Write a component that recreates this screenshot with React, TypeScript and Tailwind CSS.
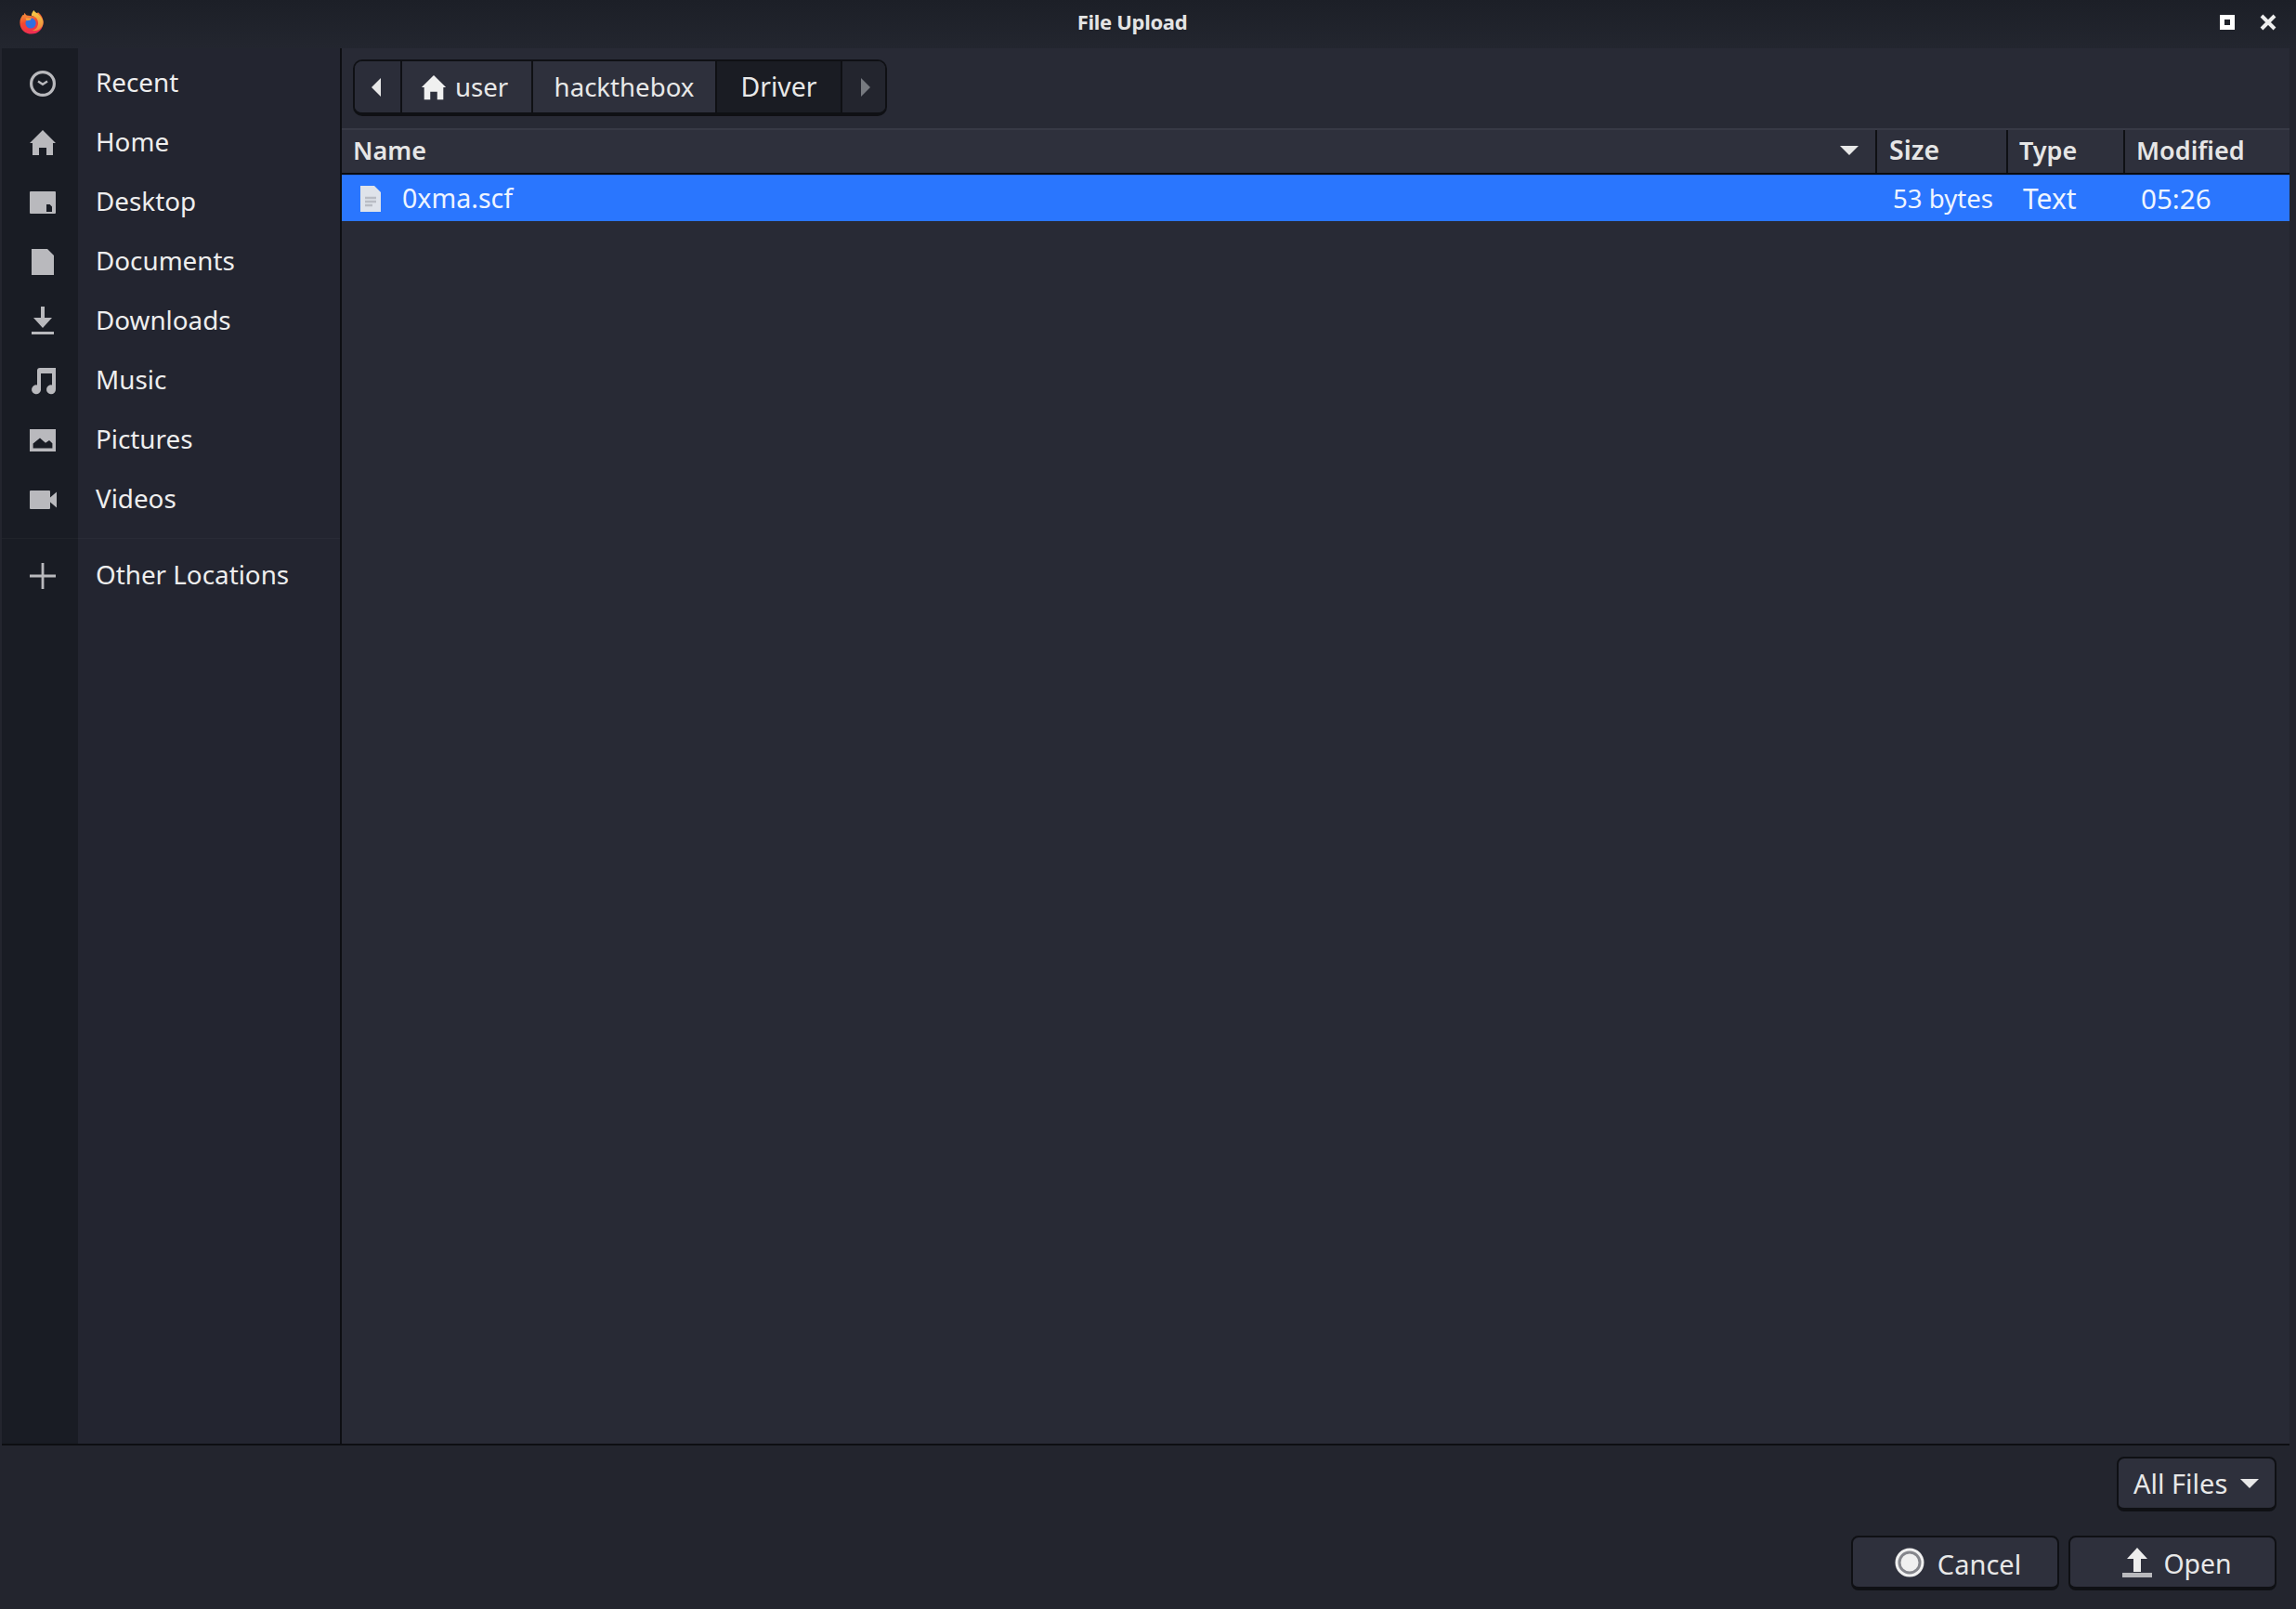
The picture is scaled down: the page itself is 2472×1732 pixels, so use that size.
import React from "react";

const C = "#b9b9bd";

function Firefox() {
  return (
    <svg width="28" height="28" viewBox="0 0 30 30" className="block">
      <defs>
        <linearGradient id="ffo" x1="0.2" y1="0" x2="0.5" y2="1">
          <stop offset="0" stopColor="#f7a13a" />
          <stop offset="0.45" stopColor="#f2492f" />
          <stop offset="1" stopColor="#ee2a55" />
        </linearGradient>
        <linearGradient id="ffy" x1="0.5" y1="0" x2="0.5" y2="1">
          <stop offset="0" stopColor="#f6cf49" />
          <stop offset="1" stopColor="#f0843a" />
        </linearGradient>
      </defs>
      <path d="M5 6.5 C3 9 1.5 11.5 1.5 15.5 C1.5 23 7.5 28.5 15 28.5 C22.5 28.5 28.5 23 28.5 15 C28.5 10 26 6 22.5 3.5 L17.5 8 L9 7 Z" fill="url(#ffo)" />
      <path d="M17.5 1 C16 3 14.5 5.5 15 7.5 C20 8 23 12 22.5 17 C22 21 19.5 24 15.5 24.5 C22 26 28.5 21.5 28.5 15 C28.5 9.5 24 7 22.5 5.5 C21 4 19 3.5 17.5 1 Z" fill="url(#ffy)" />
      <path d="M7 4 C6 6 5.5 8 6 9.5 L11 9 C9.5 7.5 8 6 7 4 Z" fill="#f3803a" />
      <circle cx="14" cy="16" r="6" fill="#2f6fe0" />
      <path d="M8 10 L15 10 L13.5 12.5 L9 13 Z" fill="#f5a13c" />
    </svg>
  );
}

function Ico({ children }: { children: React.ReactNode }) {
  return (
    <svg width="32" height="32" viewBox="0 0 16 16" fill={C} className="block">
      {children}
    </svg>
  );
}

const icons: Record<string, React.ReactNode> = {
  Recent: (
    <Ico>
      <circle cx="8" cy="8" r="6.2" fill="none" stroke={C} strokeWidth="1.6" />
      <path d="M5.5 6.8 L8 8.4 L10.5 6.8" fill="none" stroke={C} strokeWidth="1.2" />
    </Ico>
  ),
  Home: (
    <Ico>
      <path d="M8 1 L15 8 L13.5 8 L13.5 14.5 L10 14.5 L10 10.5 L6 10.5 L6 14.5 L2.5 14.5 L2.5 8 L1 8 Z" />
    </Ico>
  ),
  Desktop: (
    <Ico>
      <path fillRule="evenodd" d="M1.5 2 H14.5 A0.5 0.5 0 0 1 15 2.5 V13.5 A0.5 0.5 0 0 1 14.5 14 H1.5 A0.5 0.5 0 0 1 1 13.5 V2.5 A0.5 0.5 0 0 1 1.5 2 Z M10 9 V13 H13 V10.2 L11.8 9 Z" />
    </Ico>
  ),
  Documents: (
    <Ico>
      <path d="M2 1 H10.5 L14 4.5 V15 H2 Z" />
    </Ico>
  ),
  Downloads: (
    <Ico>
      <path d="M7 0 H9 V6 H13 L8 11.5 L3 6 H7 Z" />
      <rect x="2" y="13.5" width="12" height="1.5" />
    </Ico>
  ),
  Music: (
    <Ico>
      <path d="M5 2.5 Q5 1 6.5 1 H15 V12.5 A2.5 2.5 0 1 1 13 10.2 V4 H7 V13 A2.5 2.5 0 1 1 5 10.2 Z" />
    </Ico>
  ),
  Pictures: (
    <Ico>
      <path fillRule="evenodd" d="M1 2 H15 V14 H1 Z M2.8 12.2 H13.2 V9.6 L11.5 8 L9.5 9.4 L6.5 6.8 L2.8 9.8 Z" />
    </Ico>
  ),
  Videos: (
    <Ico>
      <path d="M1.5 3 H11.5 A0.5 0.5 0 0 1 12 3.5 V6.8 L15.5 3.8 V12.2 L12 9.2 V12.5 A0.5 0.5 0 0 1 11.5 13 H1.5 A0.5 0.5 0 0 1 1 12.5 V3.5 A0.5 0.5 0 0 1 1.5 3 Z" />
    </Ico>
  ),
  "Other Locations": (
    <Ico>
      <path d="M7.3 1 H8.7 V7.3 H15 V8.7 H8.7 V15 H7.3 V8.7 H1 V7.3 H7.3 Z" />
    </Ico>
  ),
};

function SideRow({ label }: { label: string }) {
  return (
    <div className="flex h-16 items-center">
      <div className="flex w-[82px] shrink-0 items-center justify-center pl-[6px]">{icons[label]}</div>
      <span className="pb-[3px] pl-[19px] text-[27.8px] leading-none text-[#eeeeee]">{label}</span>
    </div>
  );
}

function Arrow({ dir, color }: { dir: "l" | "r" | "d"; color: string }) {
  if (dir === "d")
    return (
      <svg width="20" height="10" viewBox="0 0 20 10" fill={color} className="block">
        <path d="M0 0 H20 L10 10 Z" />
      </svg>
    );
  return (
    <svg width="10" height="20" viewBox="0 0 10 20" fill={color} className="block">
      <path d={dir === "l" ? "M10 0 V20 L0 10 Z" : "M0 0 V20 L10 10 Z"} />
    </svg>
  );
}

const ctl =
  "rounded-lg border-2 border-[#0f1014] border-b-[4px] bg-[#2e303c] text-[29px] leading-none text-[#e8e8e8]";

export default function App() {
  return (
    <div className="flex h-[1732px] w-[2472px] flex-col overflow-hidden bg-[#23252e] font-['Noto_Sans',sans-serif]">
      {/* title bar */}
      <div className="flex h-[52px] shrink-0 items-center bg-gradient-to-b from-[#1c1f27] to-[#23262f] pb-[4px]">
        <div className="ml-[20px]">
          <Firefox />
        </div>
        <div className="flex-1 pb-[2px] text-center text-[22px] font-bold tracking-[-0.3px] text-[#e4e4e4]">File Upload</div>
        <div className="mr-[21px] flex items-center gap-[27px]">
          <div className="h-[16px] w-[16px] border-[5px] border-white" />
          <svg width="18" height="18" viewBox="0 0 18 18" className="block">
            <path d="M2 2 L16 16 M16 2 L2 16" stroke="#eeeeee" strokeWidth="4" />
          </svg>
        </div>
      </div>

      {/* body */}
      <div className="ml-[2px] mr-[7px] flex h-[1504px] shrink-0 border-b-2 border-[#0d0e12]">
        <div className="relative w-[364px] shrink-0 bg-[#232530] pt-[6px]">
          <div className="pointer-events-none absolute inset-y-0 left-0 w-[82px] bg-[#191c24]" />
          <div className="relative">
            {["Recent", "Home", "Desktop", "Documents", "Downloads", "Music", "Pictures", "Videos"].map((l) => (
              <SideRow key={l} label={l} />
            ))}
            <div className="mt-[9px] mb-[8px] h-px bg-[#ffffff08]" />
            <SideRow label="Other Locations" />
          </div>
        </div>

        <div className="flex min-w-0 flex-1 flex-col border-l-2 border-[#0d0e12] bg-[#282a35]">
          {/* breadcrumb */}
          <div className="flex h-[86px] shrink-0 items-start pl-[12px] pt-[12px]">
            <div className="flex h-[61px] overflow-hidden rounded-[10px] border-2 border-[#0f1014] border-b-[4px] text-[27.6px] leading-none text-[#e8e8e8]">
              <div className="flex w-[51px] items-center justify-center border-r-2 border-[#0f1014] bg-[#2b2d39] pr-[3px]">
                <Arrow dir="l" color="#e8e8e8" />
              </div>
              <div className="flex w-[141px] items-center border-r-2 border-[#0f1014] bg-[#2e303c] pl-[19px]">
                <svg width="30" height="30" viewBox="0 0 16 16" fill="#f0f0f0" className="block">
                  <path d="M8 1 L15 8 L13.5 8 L13.5 15 L10 15 L10 10.5 L6 10.5 L6 15 L2.5 15 L2.5 8 L1 8 Z" />
                </svg>
                <span className="ml-[8px]">user</span>
              </div>
              <div className="flex w-[198px] items-center justify-center border-r-2 border-[#0f1014] bg-[#2e303c]">hackthebox</div>
              <div className="flex w-[135px] items-center justify-center border-r-2 border-[#0f1014] bg-[#1a1c23] text-[28.4px]">Driver</div>
              <div className="flex w-[46px] items-center justify-center bg-[#23252e] pl-[3px]">
                <Arrow dir="r" color="#777a80" />
              </div>
            </div>
          </div>

          {/* column header */}
          <div className="flex h-[50px] shrink-0 items-center border-y-2 border-t-[#383a46] border-b-[#0a0b0e] bg-[#2e303c] text-[27px] font-semibold leading-none text-[#e6e6e6]">
            <div className="flex h-full w-[1651px] shrink-0 items-center justify-between pb-[3px] pl-[12px] pr-[18px]">
              <span>Name</span>
              <Arrow dir="d" color="#e8e8e8" />
            </div>
            <div className="flex h-full w-[141px] shrink-0 items-center border-l-2 border-[#0f1014] pb-[3px] pl-[13px] text-[28.5px]">Size</div>
            <div className="flex h-full w-[126px] shrink-0 items-center border-l-2 border-[#0f1014] pb-[3px] pl-[12px]">Type</div>
            <div className="flex h-full flex-1 items-center border-l-2 border-[#0f1014] pb-[3px] pl-[12px]">Modified</div>
          </div>

          {/* selected row */}
          <div className="flex h-[50px] shrink-0 items-center border-t border-[#2769e0] bg-[#2a76fe] text-[28.6px] leading-none text-[#eef4ff]">
            <div className="flex w-[1651px] shrink-0 items-center pl-[20px]">
              <svg width="22" height="28" viewBox="0 0 22 28" className="block">
                <path d="M0 0 H15 L22 7 V28 H0 Z" fill="#dfe3ea" />
                <path d="M5 13 H17 M5 17 H17 M5 21 H13" stroke="#b9bcc4" strokeWidth="2.5" />
              </svg>
              <span className="ml-[23px]">0xma.scf</span>
            </div>
            <div className="w-[141px] shrink-0 pl-[19px] text-[27.6px]">53 bytes</div>
            <div className="w-[126px] shrink-0 pl-[18px] text-[30px]">Text</div>
            <div className="flex-1 pl-[19px] text-[29.6px]">05:26</div>
          </div>
        </div>
      </div>

      {/* footer */}
      <div className="flex flex-1 flex-col items-end pr-[21px] pt-[12px]">
        <div className={`${ctl} flex h-[59px] w-[172px] items-center justify-between pl-[16px] pr-[17px]`}>
          <span>All Files</span>
          <Arrow dir="d" color="#e8e8e8" />
        </div>
        <div className="mt-[26px] flex gap-[10px]">
          <div className={`${ctl} flex h-[59px] w-[224px] items-center justify-center gap-[14px] pl-[6px]`}>
            <svg width="32" height="32" viewBox="0 0 32 32" className="block">
              <circle cx="16" cy="16" r="15.5" fill="#f0f0f0" />
              <circle cx="16" cy="16" r="11" fill="none" stroke="#85868c" strokeWidth="3" />
            </svg>
            <span className="pt-[3px]">Cancel</span>
          </div>
          <div className={`${ctl} flex h-[59px] w-[224px] items-center justify-center gap-[12px] pl-[10px]`}>
            <svg width="32" height="32" viewBox="0 0 32 32" fill="#ededed" className="block">
              <path d="M16 0 L27 12 H20 V26 H12 V12 H5 Z" />
              <rect x="0" y="27" width="32" height="5" fill="#b9b9bd" />
            </svg>
            <span className="pt-[3px] text-[28.4px]">Open</span>
          </div>
        </div>
      </div>
    </div>
  );
}
